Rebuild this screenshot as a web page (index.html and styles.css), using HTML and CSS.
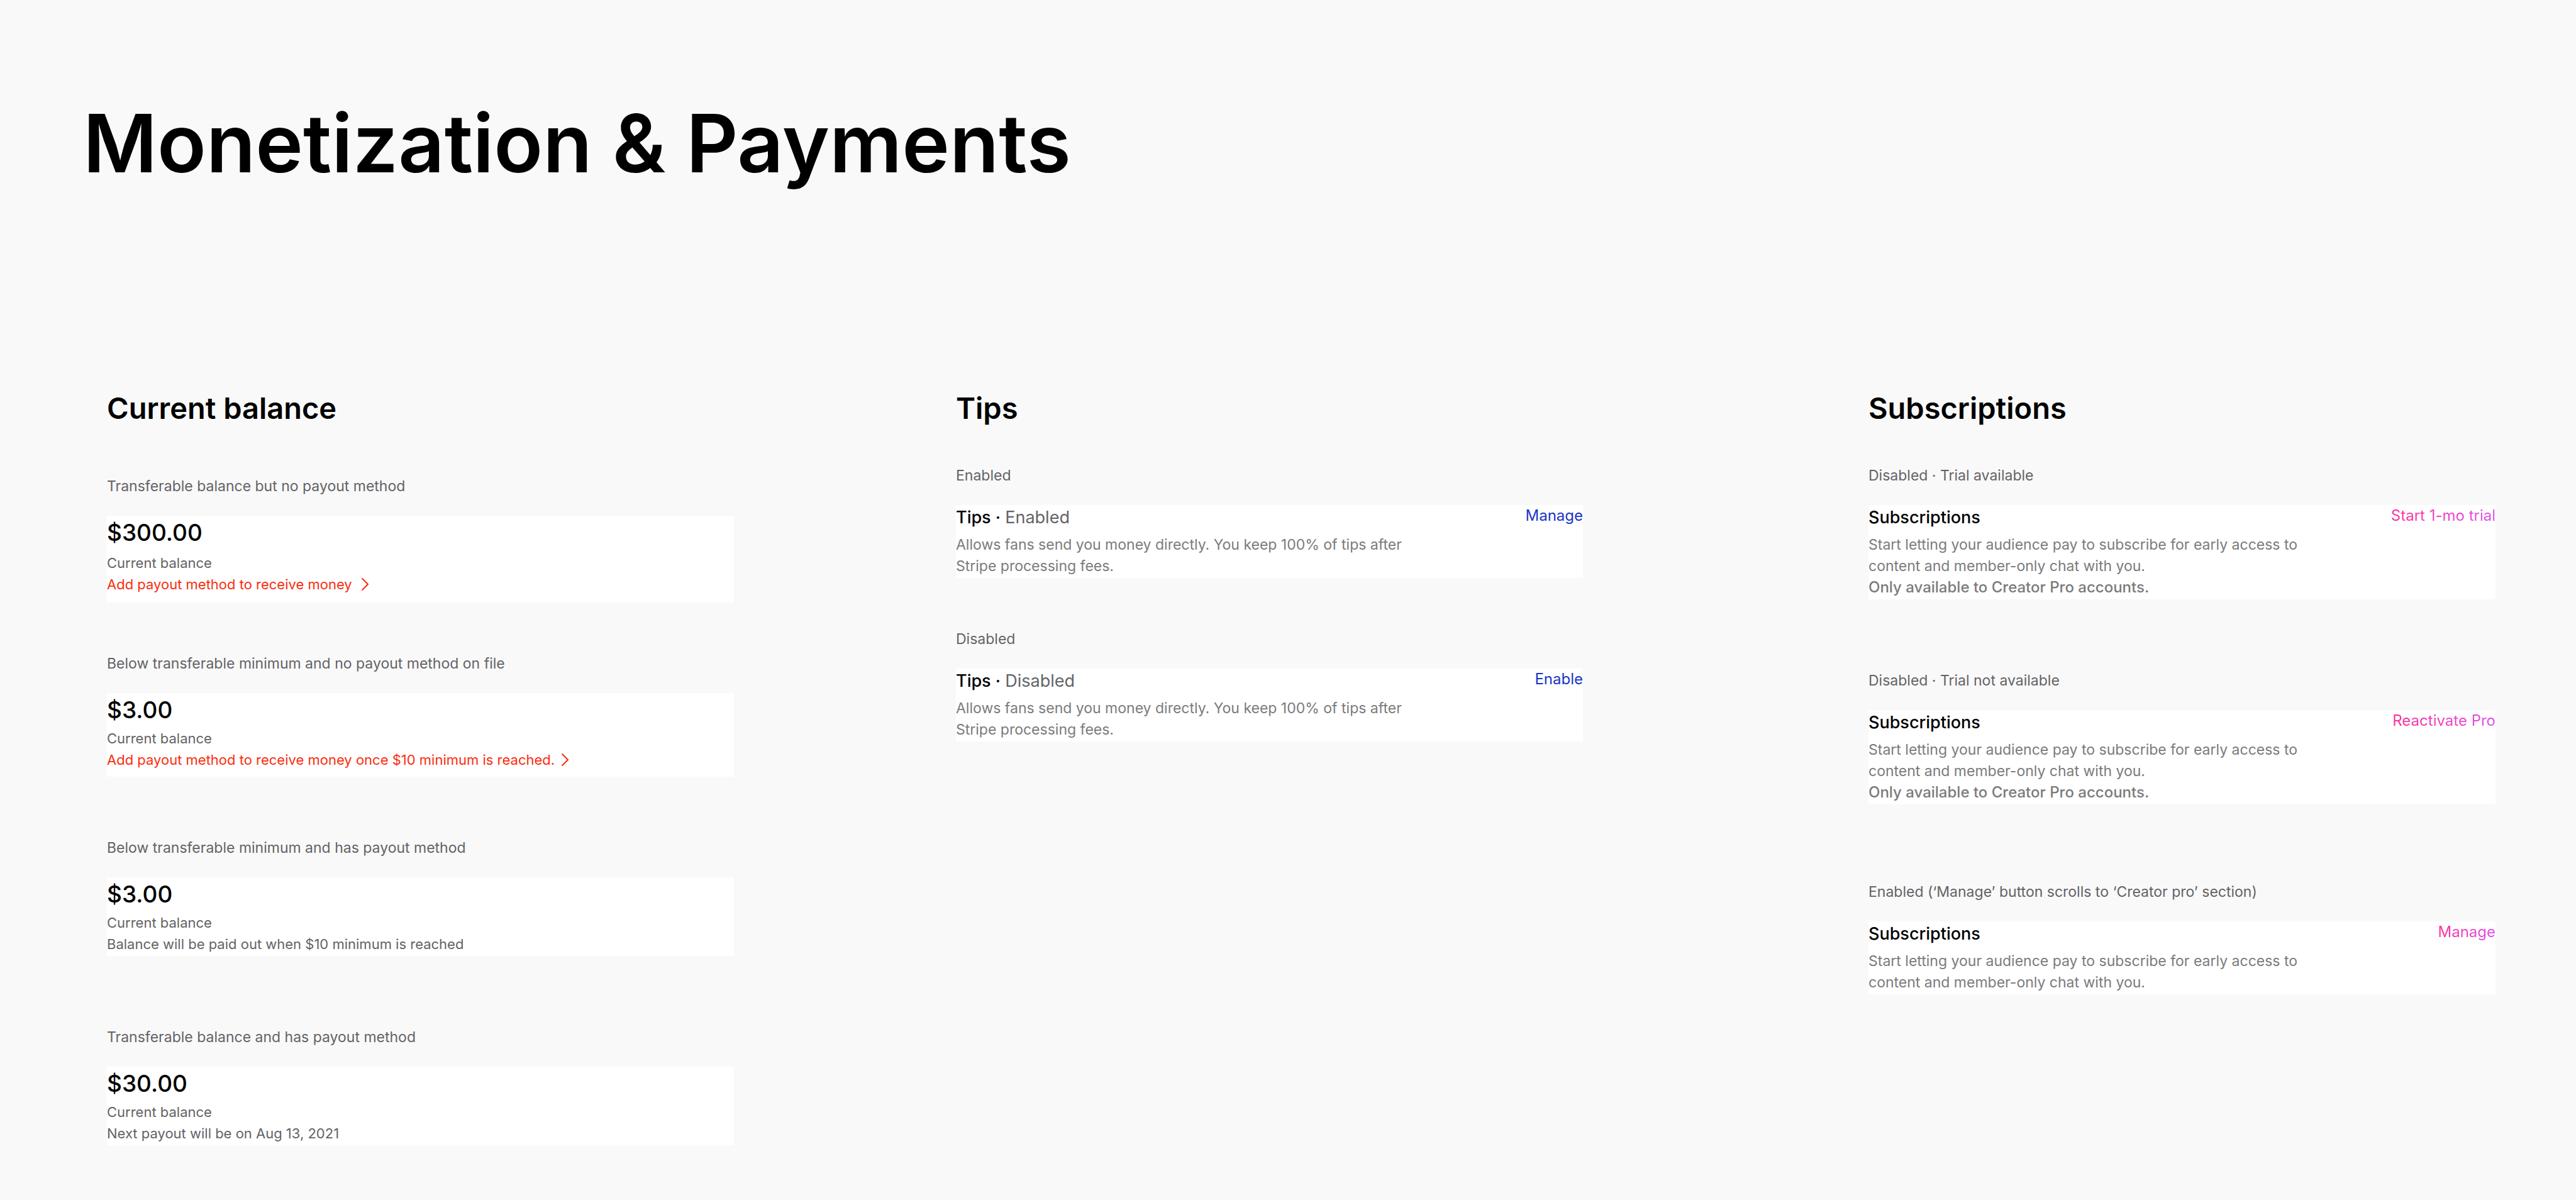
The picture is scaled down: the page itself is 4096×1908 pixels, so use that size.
FILE: index.html
```html
<!DOCTYPE html>
<html lang="en">
<head>
<meta charset="utf-8">
<title>Monetization &amp; Payments</title>
<link rel="stylesheet" href="styles.css">
</head>
<body>
<main class="page">
  <h1 class="page-title">Monetization &amp; Payments</h1>
  <div class="columns">
    <section class="column column-balance">
      <h2 class="heading">Current balance</h2>
      <article class="state">
        <h3 class="label">Transferable balance but no payout method</h3>
        <div class="card balance balance-roomy">
          <p class="amount">$300.00</p>
          <p class="note">Current balance</p>
          <a class="alert" href="#payout"><span>Add payout method to receive money</span><svg class="chevron chevron-spaced" viewBox="0 0 11 20" aria-hidden="true"><path d="M1 1 10 10 1 19"/></svg></a>
        </div>
      </article>
      <article class="state space-small">
        <h3 class="label">Below transferable minimum and no payout method on file</h3>
        <div class="card balance balance-linked">
          <p class="amount">$3.00</p>
          <p class="note">Current balance</p>
          <a class="alert" href="#payout"><span>Add payout method to receive money once $10 minimum is reached.</span><svg class="chevron" viewBox="0 0 11 20" aria-hidden="true"><path d="M1 1 10 10 1 19"/></svg></a>
        </div>
      </article>
      <article class="state space-medium">
        <h3 class="label">Below transferable minimum and has payout method</h3>
        <div class="card balance">
          <p class="amount">$3.00</p>
          <p class="note">Current balance</p>
          <p class="note">Balance will be paid out when $10 minimum is reached</p>
        </div>
      </article>
      <article class="state space-large">
        <h3 class="label">Transferable balance and has payout method</h3>
        <div class="card balance">
          <p class="amount">$30.00</p>
          <p class="note">Current balance</p>
          <p class="note">Next payout will be on Aug 13, 2021</p>
        </div>
      </article>
    </section>

    <section class="column column-tips">
      <h2 class="heading">Tips</h2>
      <article class="state">
        <h3 class="label">Enabled</h3>
        <div class="card feature">
          <div class="feature-text">
            <h4 class="feature-title">Tips · <span class="status">Enabled</span></h4>
            <p class="description">Allows fans send you money directly. You keep 100% of tips after<br>Stripe processing fees.</p>
          </div>
          <button class="action" type="button">Manage</button>
        </div>
      </article>
      <article class="state space-small">
        <h3 class="label">Disabled</h3>
        <div class="card feature">
          <div class="feature-text">
            <h4 class="feature-title">Tips · <span class="status">Disabled</span></h4>
            <p class="description">Allows fans send you money directly. You keep 100% of tips after<br>Stripe processing fees.</p>
          </div>
          <button class="action" type="button">Enable</button>
        </div>
      </article>
    </section>

    <section class="column column-subscriptions">
      <h2 class="heading">Subscriptions</h2>
      <article class="state">
        <h3 class="label">Disabled · Trial available</h3>
        <div class="card feature">
          <div class="feature-text">
            <h4 class="feature-title">Subscriptions</h4>
            <p class="description">Start letting your audience pay to subscribe for early access to<br>content and member-only chat with you.<br><strong>Only available to Creator Pro accounts.</strong></p>
          </div>
          <button class="action action-pro" type="button">Start 1-mo trial</button>
        </div>
      </article>
      <article class="state space-large">
        <h3 class="label">Disabled · Trial not available</h3>
        <div class="card feature">
          <div class="feature-text">
            <h4 class="feature-title">Subscriptions</h4>
            <p class="description">Start letting your audience pay to subscribe for early access to<br>content and member-only chat with you.<br><strong>Only available to Creator Pro accounts.</strong></p>
          </div>
          <button class="action action-pro" type="button">Reactivate Pro</button>
        </div>
      </article>
      <article class="state space-huge">
        <h3 class="label">Enabled (‘Manage’ button scrolls to ‘Creator pro’ section)</h3>
        <div class="card feature">
          <div class="feature-text">
            <h4 class="feature-title">Subscriptions</h4>
            <p class="description">Start letting your audience pay to subscribe for early access to<br>content and member-only chat with you.</p>
          </div>
          <button class="action action-pro" type="button">Manage</button>
        </div>
      </article>
    </section>
  </div>
</main>
</body>
</html>
```

FILE: styles.css
```css
* {
  box-sizing: border-box;
}

body,
h1,
h2,
h3,
h4,
p {
  margin: 0;
}

body {
  background: #f9f9f9;
  color: #000;
  font-family: Inter, "Liberation Sans", sans-serif;
}

.page {
  padding: 150px 128px 84px 170px;
}

.page-title {
  margin-left: -38px;
  font-size: 128px;
  line-height: 156px;
  font-weight: 600;
}

.columns {
  display: grid;
  grid-template-columns: 1350fr 1451fr 997fr;
  align-items: start;
  margin-top: 313px;
}

.column {
  display: flex;
  flex-direction: column;
}

.column-balance {
  padding-right: 353px;
}

.column-tips {
  padding-right: 454px;
}

.heading {
  margin-bottom: 61px;
  font-size: 47px;
  line-height: 60px;
  font-weight: 600;
}

.column-balance .heading {
  margin-bottom: 78px;
}

/* Vertical rhythm between states */
.space-small {
  margin-top: 81px;
}

.space-medium {
  margin-top: 97px;
}

.space-large {
  margin-top: 113px;
}

.space-huge {
  margin-top: 123px;
}

.label {
  margin-bottom: 31px;
  color: #636366;
  font-size: 23px;
  line-height: 32px;
  font-weight: 400;
}

.card {
  background: #fff;
}

/* Balance cards */
.balance {
  padding-bottom: 2px;
}

.balance-linked {
  padding-bottom: 10px;
}

.balance-roomy {
  padding-bottom: 12px;
}

.amount {
  margin-bottom: 1px;
  font-size: 37px;
  line-height: 54px;
  font-weight: 500;
}

.balance-roomy .amount {
  margin-bottom: 4px;
}

.note,
.alert {
  font-size: 22px;
  line-height: 34px;
}

.note {
  color: #636366;
}

.alert {
  display: flex;
  align-items: center;
  gap: 11px;
  color: #fa2d0f;
  text-decoration: none;
}

.chevron {
  width: 11px;
  height: 20px;
  fill: none;
  stroke: currentColor;
  stroke-width: 2;
  stroke-linecap: round;
}

.chevron-spaced {
  margin-left: 4px;
}

/* Feature cards */
.feature {
  display: flex;
  justify-content: space-between;
  align-items: flex-start;
}

.feature-title {
  font-size: 27px;
  line-height: 40px;
  font-weight: 500;
}

.status {
  color: #636366;
  font-weight: 400;
}

.description {
  margin-top: 6px;
  padding-bottom: 2px;
  color: #7b7b7b;
  font-size: 23px;
  line-height: 34px;
}

.description strong {
  font-size: 24px;
  font-weight: 500;
}

.action {
  padding: 0;
  border: 0;
  background: none;
  color: #1a35c4;
  font: inherit;
  font-size: 24px;
  line-height: 34px;
}

.action-pro {
  background: linear-gradient(90deg, #fc2f9a, #e04fee);
  background-clip: text;
  -webkit-background-clip: text;
  color: transparent;
}
```
